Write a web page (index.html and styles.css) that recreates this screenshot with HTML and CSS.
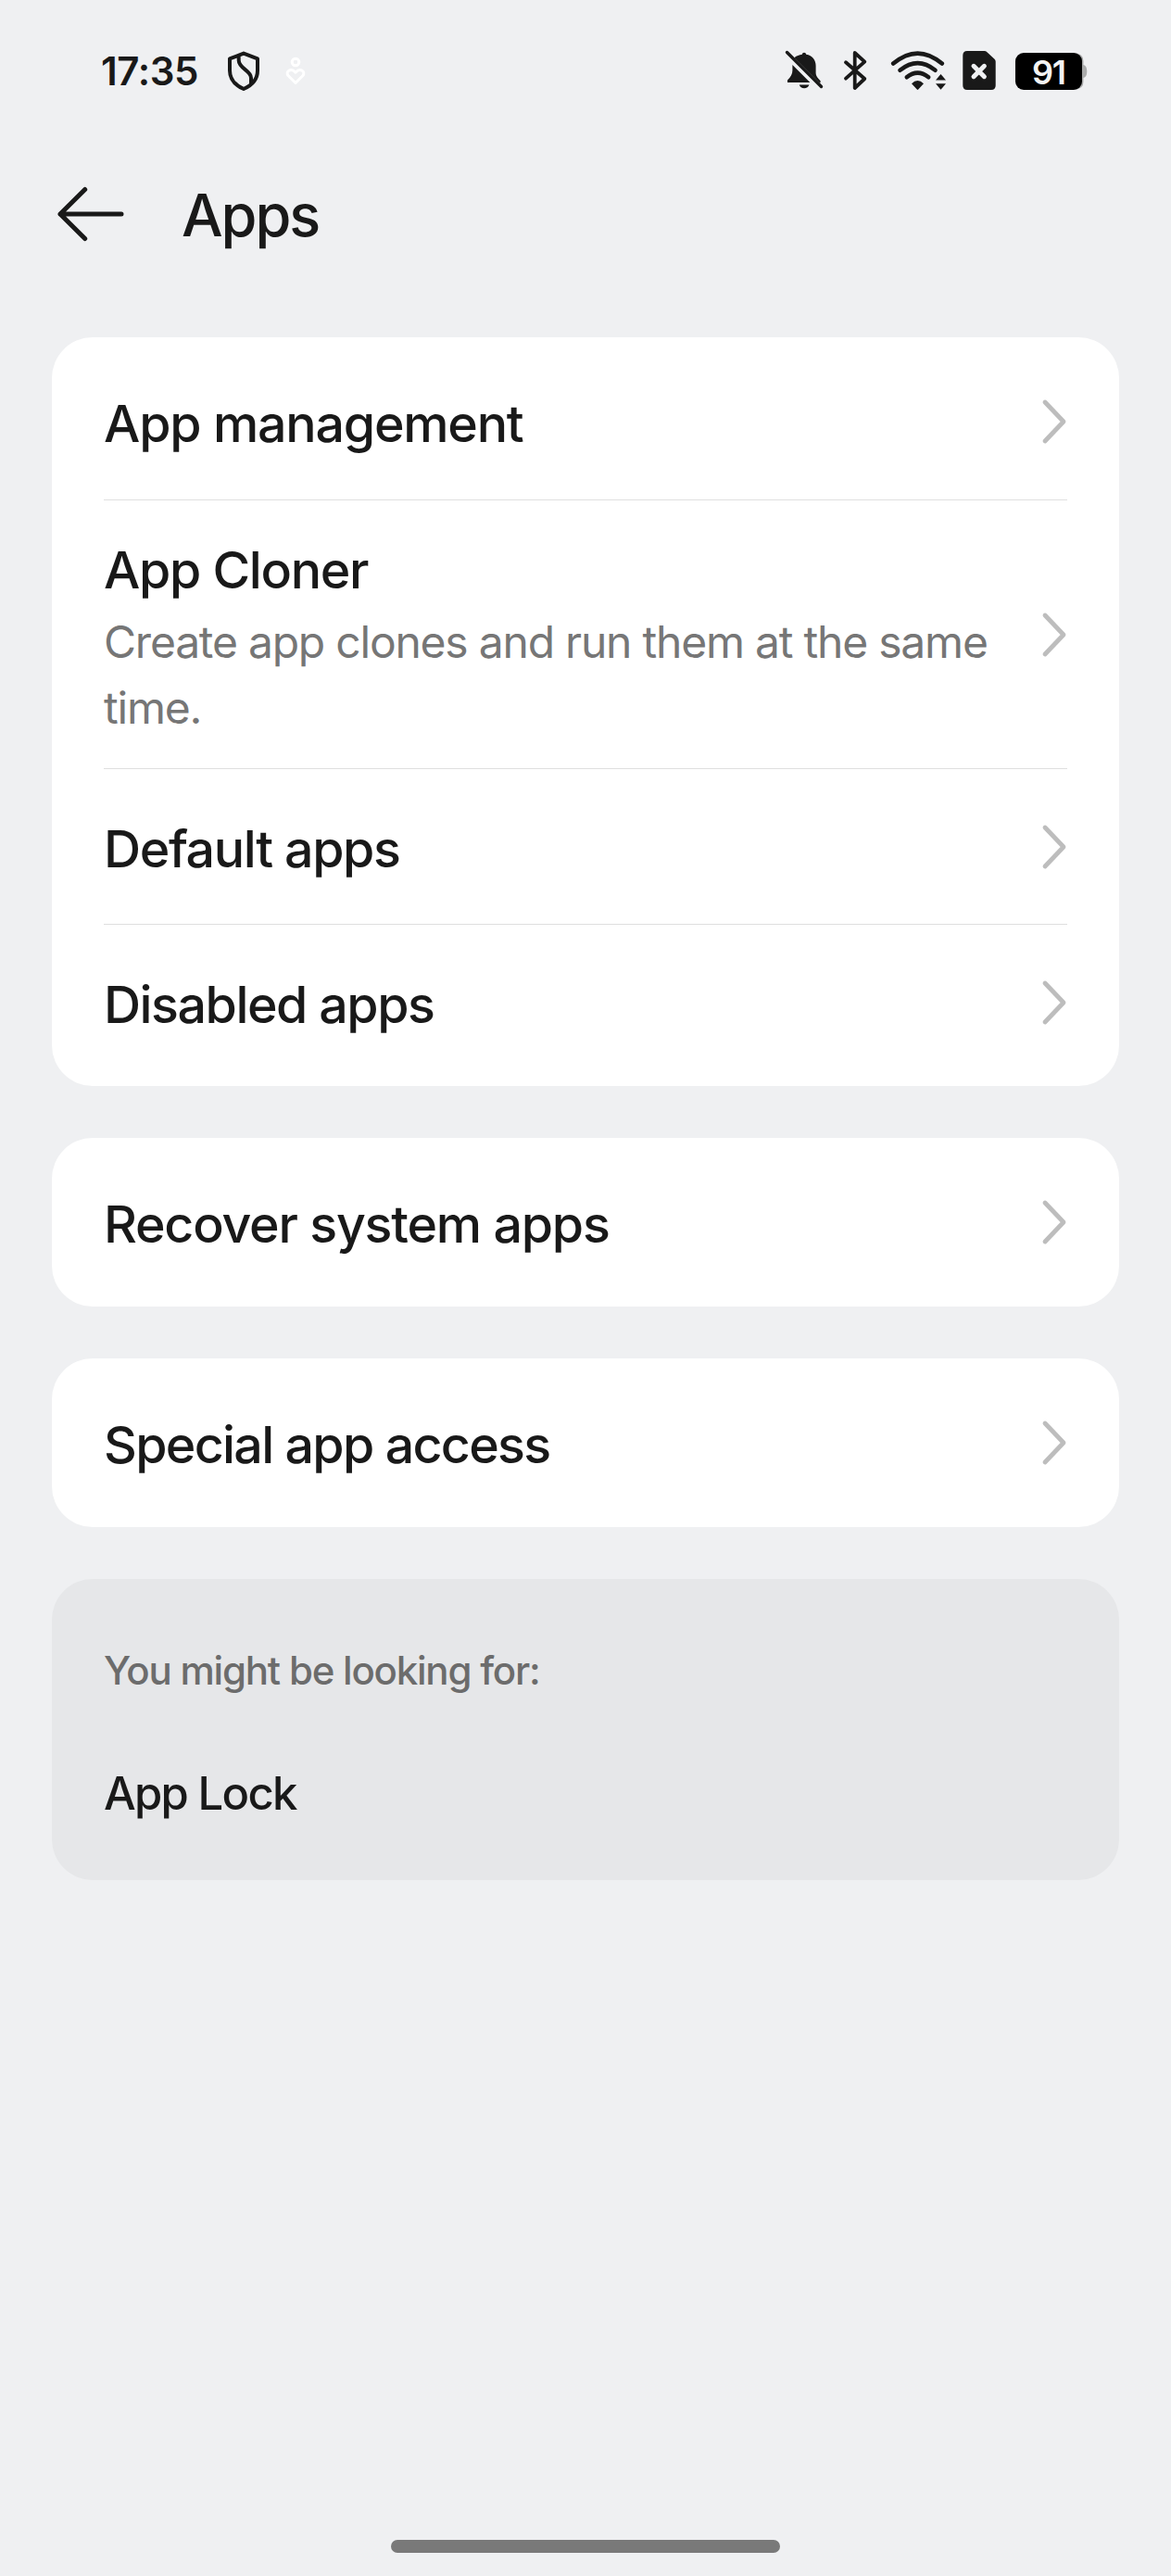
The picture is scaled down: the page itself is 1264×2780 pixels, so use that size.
FILE: index.html
```html
<!DOCTYPE html>
<html lang="en">
<head>
<meta charset="utf-8">
<title>Apps</title>
<link rel="stylesheet" href="styles.css">
</head>
<body>
<svg width="0" height="0" class="defs" aria-hidden="true">
  <symbol id="chevron" viewBox="0 0 28 50"><path d="M4 4 L24 25 L4 46"/></symbol>
</svg>
<div class="screen">
  <div class="status">
    <span class="time">17:35</span>
    <svg class="icon shield" viewBox="244 48 38 56" width="38" height="56"><path d="M263 57.6 L278 63.4 V76 C278 86 271 92.500 263 96 C255 92.500 248 86 248 76 V63.400 Z M257.700 60.500 V65 C257.700 74 271 76 271 84 V91"/></svg>
    <svg class="icon heart" viewBox="306 48 26 56" width="26" height="56"><circle cx="319" cy="67" r="3.800"/><path d="M319 89.500 L311.200 81.800 C307.500 77.500 314 72.500 319 78.200 C324 72.500 330.500 77.500 326.800 81.800 Z"/></svg>
    <div class="status-right">
      <svg class="icon bell" viewBox="846 48 44 56" width="44" height="56"><path class="line" d="M849.500 56.500 L886.500 93.500"/><path d="M857.500 62.200 C860 60.200 862.500 59.300 865.800 58.800 C866 56 870 56 870.200 58.800 C877 60 880.600 65 880.600 71 V79 C880.600 82 882.500 84 885.600 87.200 V89.300 H884.600 Z M855.400 70 L874.400 89 H850 V86.500 C853.500 83 855.400 80 855.400 76 Z M862.800 91.600 H873.400 C872.500 96.500 863.700 96.500 862.800 91.600 Z"/></svg>
      <svg class="icon bluetooth" viewBox="910 48 27 56" width="27" height="56"><path d="M913 67.300 L933.300 85 L922.700 95 V57 L933.300 66.600 L913 84.700"/></svg>
      <svg class="icon wifi" viewBox="961 48 62 56" width="62" height="56"><g class="arcs"><path d="M964.200 68.600 Q990.500 46.500 1016.800 68.600"/><path d="M971.500 75.800 Q990.500 60.500 1009.500 75.800"/><path d="M978.800 83.300 Q990.500 73.800 1002.200 83.300"/></g><path d="M984 90.300 Q990.500 83.500 997 90.300 L991.200 96.600 Q990.500 97.200 989.800 96.600 Z M1010 86.500 L1015.500 80 L1021 86.500 Z M1010 90.200 H1021 L1015.500 96.800 Z"/></svg>
      <svg class="icon sim" viewBox="1038 48 38 56" width="38" height="56"><path d="M1044 55 H1062.500 Q1064.200 55 1065.400 56.200 L1073.500 63.800 Q1074.700 65 1074.700 66.500 V92.300 Q1074.700 97 1070 97 H1044 Q1039.300 97 1039.300 92.300 V59.700 Q1039.300 55 1044 55 Z"/><path class="cross" d="M1051 71.300 L1062.400 82.700 M1062.400 71.300 L1051 82.700"/></svg>
      <svg class="icon battery" viewBox="1095 48 80 56" width="80" height="56"><path class="nub" d="M1160 57.500 Q1169.500 57.500 1169.500 66 V70 Q1173.300 71 1173.300 77 Q1173.300 83 1169.500 84 V88 Q1169.500 96.500 1160 96.500 Z"/><rect x="1096" y="57" width="72" height="40" rx="9"/><text x="1114" y="91" textLength="37">91</text></svg>
    </div>
  </div>

  <header class="header">
    <svg class="back" viewBox="0 0 76 62" width="76" height="62"><path d="M71 31 H5 M31.700 4.500 L5 31 L31.700 57.500"/></svg>
    <h1 class="title">Apps</h1>
  </header>

  <main class="content">
    <section class="card list">
      <div class="row first"><div class="text"><div class="label">App management</div></div><svg class="chevron"><use href="#chevron"/></svg></div>
      <div class="row tall"><div class="text"><div class="label fit-cloner">App Cloner</div><div class="summary">Create app clones and run them at the same time.</div></div><svg class="chevron"><use href="#chevron"/></svg></div>
      <div class="row"><div class="text"><div class="label fit-default">Default apps</div></div><svg class="chevron"><use href="#chevron"/></svg></div>
      <div class="row last"><div class="text"><div class="label fit-disabled">Disabled apps</div></div><svg class="chevron"><use href="#chevron"/></svg></div>
    </section>
    <section class="card single"><div class="text"><div class="label">Recover system apps</div></div><svg class="chevron"><use href="#chevron"/></svg></section>
    <section class="card single"><div class="text"><div class="label fit-special">Special app access</div></div><svg class="chevron"><use href="#chevron"/></svg></section>
    <section class="card related">
      <div class="related-title">You might be looking for:</div>
      <div class="related-item">App Lock</div>
    </section>
  </main>
  <div class="home-bar"></div>
</div>
</body>
</html>
```
FILE: styles.css
```css
* { box-sizing: border-box; }

body {
  margin: 0;
  background: #eff0f2;
  color: #191919;
  font-family: Inter, "Liberation Sans", sans-serif;
}

.defs { display: block; }

.screen {
  width: 1264px;
  height: 2780px;
  display: flex;
  flex-direction: column;
}

/* Status bar */
.status {
  display: flex;
  align-items: center;
  height: 104px;
  padding: 48px 89px 0 109px;
}

.time {
  width: 135px;
  font-size: 42px;
  font-weight: 600;
  line-height: 57px;
  letter-spacing: -0.01em;
}

.icon {
  display: block;
  flex: none;
  fill: #191919;
  stroke-linecap: round;
  stroke-linejoin: round;
}

.shield { fill: none; stroke: #191919; stroke-width: 4; }
.heart { margin-left: 24px; fill: none; stroke: #fff; stroke-width: 3; }

.status-right { display: flex; margin-left: auto; }
.bell .line { stroke: #191919; stroke-width: 3.4; }
.bluetooth { margin-left: 20px; fill: none; stroke: #191919; stroke-width: 3.8; }
.wifi { margin-left: 24px; }
.arcs { fill: none; stroke: #191919; stroke-width: 4.6; }
.sim { margin-left: 15px; }
.cross { stroke: #eff0f2; stroke-width: 5; }
.battery { margin-left: 19px; fill: #000; }
.nub { fill: #aaabab; }
.battery text { fill: #f3f3f3; font-size: 36px; font-weight: 600; }

/* Header */
.header {
  display: flex;
  align-items: center;
  height: 260px;
  padding: 0 60px 6px;
}

.back {
  fill: none;
  stroke: #191919;
  stroke-width: 5;
  stroke-linecap: round;
  stroke-linejoin: round;
}

.title {
  margin: 2px 0 0 60px;
  font-size: 63px;
  font-weight: 500;
  line-height: 76px;
  letter-spacing: -0.033em;
}

/* Cards */
.content {
  display: flex;
  flex-direction: column;
  gap: 56px;
  padding: 0 56px;
}

.card { border-radius: 44px; background: #fff; }
.list { padding: 7px 56px; }

.row {
  display: flex;
  align-items: center;
  justify-content: space-between;
  height: 168px;
  border-bottom: 1px solid #dfdfdf;
}

.row.first { height: 169px; }
.row.tall { height: 290px; }
.row.tall .text { padding-top: 11px; }
.row.last { height: 167px; border-bottom: 0; }

.single {
  display: flex;
  align-items: center;
  justify-content: space-between;
  height: 182px;
  padding: 0 56px;
}

.text { width: 975px; padding-top: 4px; }

.label {
  font-size: 55.5px;
  font-weight: 500;
  line-height: 66px;
  letter-spacing: -0.022em;
}

.fit-cloner { letter-spacing: -0.024em; }
.fit-default { letter-spacing: -0.025em; }
.fit-disabled { letter-spacing: -0.0264em; }
.fit-special { letter-spacing: -0.0305em; }

.summary {
  margin-top: 9px;
  color: #767676;
  font-size: 48px;
  line-height: 71px;
  letter-spacing: -0.0254em;
}

.chevron {
  flex: none;
  width: 28px;
  height: 50px;
  fill: none;
  stroke: #bdbdbd;
  stroke-width: 4.8;
  stroke-linecap: round;
  stroke-linejoin: round;
}

.related {
  height: 325px;
  padding: 69px 56px 0;
  background: #e6e7e9;
}

.related-title {
  color: #6c6c6c;
  font-size: 42px;
  font-weight: 500;
  line-height: 60px;
  letter-spacing: -0.029em;
}

.related-item {
  margin-top: 73px;
  font-size: 49px;
  font-weight: 500;
  line-height: 60px;
  letter-spacing: -0.035em;
}

.home-bar {
  width: 420px;
  height: 14px;
  margin: auto auto 25px;
  border-radius: 7px;
  background: #797979;
}
```
